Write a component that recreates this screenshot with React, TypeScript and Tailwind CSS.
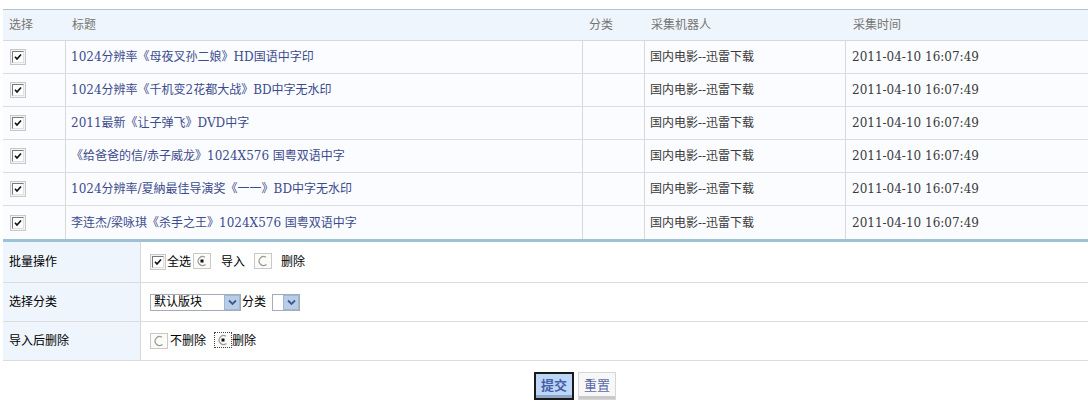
import React from "react";

const rows = [
  "1024分辨率《母夜叉孙二娘》HD国语中字印",
  "1024分辨率《千机变2花都大战》BD中字无水印",
  "2011最新《让子弹飞》DVD中字",
  "《给爸爸的信/赤子威龙》1024X576 国粤双语中字",
  "1024分辨率/夏納最佳导演奖《一一》BD中字无水印",
  "李连杰/梁咏琪《杀手之王》1024X576 国粤双语中字",
];

const font = { fontFamily: '"DejaVu Serif", "Noto Sans CJK SC", serif' };

function Check({ size = 16 }: { size?: number }) {
  return (
    <span
      className="inline-flex items-center justify-center border border-[#c8c8c8] bg-[#f4f4f4]"
      style={{ width: size, height: size }}
    >
      <span className="inline-flex items-center justify-center w-[12px] h-[12px] bg-white border border-t-[#7a7a7a] border-l-[#7a7a7a] border-r-[#e0e0e0] border-b-[#e0e0e0]">
        <svg width="8" height="8" viewBox="0 0 8 8">
          <path d="M1 3.8 L3 6 L7 1.5" stroke="#111" strokeWidth="1.7" fill="none" />
        </svg>
      </span>
    </span>
  );
}

function Radio({ checked, dotted }: { checked?: boolean; dotted?: boolean }) {
  return (
    <span
      className={
        "inline-flex items-center justify-center w-[18px] h-[16px] bg-[#fbfbf8] " +
        (dotted ? "border border-dotted border-[#444]" : "border border-[#c9c9c9]")
      }
    >
      <svg width="12" height="12" viewBox="0 0 12 12">
        <path d="M9 2.2 A4.5 4.5 0 1 0 9.5 9.5" stroke="#9a9a9a" strokeWidth="1.2" fill="none" />
        {checked && <rect x="4.5" y="4.5" width="3" height="3" fill="#111" />}
      </svg>
    </span>
  );
}

function Arrow() {
  return (
    <span className="inline-flex items-center justify-center w-[16px] h-[15px] bg-[#b9cde6] border border-[#9fb6d4]">
      <svg width="9" height="7" viewBox="0 0 9 7">
        <path d="M1 1.5 L4.5 5 L8 1.5" stroke="#3c5a8c" strokeWidth="1.8" fill="none" />
      </svg>
    </span>
  );
}

export default function App() {
  return (
    <div className="w-[1088px] h-[418px] bg-white text-[12px] pt-[9px] pl-[3px]" style={font}>
      <div className="border-t border-[#a9c6d6]">
        <div className="flex h-[31px] items-center bg-[#eff5fc] text-[#757575] border-b border-[#d9d9d9]">
          <div className="w-[63px] pl-[6px]">选择</div>
          <div className="w-[517px] pl-[6px]">标题</div>
          <div className="w-[62px] pl-[6px]">分类</div>
          <div className="w-[201px] pl-[6px]">采集机器人</div>
          <div className="flex-1 pl-[7px]">采集时间</div>
        </div>
        {rows.map((t, i) => (
          <div
            key={i}
            className={
              "flex h-[33px] bg-[#fafcff] " + (i < rows.length - 1 ? "border-b border-[#dcdcdc]" : "")
            }
          >
            <div className="w-[63px] flex items-center pl-[7px] border-r border-[#d8d8d8]">
              <Check />
            </div>
            <div className="w-[517px] flex items-center pl-[5px] text-[#3d4b8c] border-r border-[#d8d8d8]">
              {t}
            </div>
            <div className="w-[62px] border-r border-[#d8d8d8]" />
            <div className="w-[201px] flex items-center pl-[5px] text-[#3a3a3a] border-r border-[#d8d8d8]">
              国内电影--迅雷下载
            </div>
            <div className="flex-1 flex items-center pl-[6px] text-[#3a3a3a]">2011-04-10 16:07:49</div>
          </div>
        ))}
        <div className="h-[3px] bg-[#9dc2d6]" />
        <div className="flex h-[41px] border-b border-[#dcdcdc] text-black">
          <div className="w-[138px] flex items-center pl-[6px] bg-[#eff5fc] border-r border-[#d8d8d8]">批量操作</div>
          <div className="flex-1 flex items-center pl-[9px]">
            <Check />
            <span className="ml-[1px]">全选</span>
            <span className="ml-[2px]"><Radio checked /></span>
            <span className="ml-[10px]">导入</span>
            <span className="ml-[9px]"><Radio /></span>
            <span className="ml-[9px]">删除</span>
          </div>
        </div>
        <div className="flex h-[39px] border-b border-[#dcdcdc] text-black">
          <div className="w-[138px] flex items-center pl-[6px] bg-[#eff5fc] border-r border-[#d8d8d8]">选择分类</div>
          <div className="flex-1 flex items-center pl-[9px]">
            <span className="flex items-center h-[17px] w-[91px] border border-[#a5acb5] bg-white">
              <span className="flex-1 pl-[3px] leading-none">默认版块</span>
              <Arrow />
            </span>
            <span className="ml-[1px]">分类</span>
            <span className="ml-[6px] flex items-center justify-end h-[17px] w-[28px] border border-[#a5acb5] bg-white">
              <Arrow />
            </span>
          </div>
        </div>
        <div className="flex h-[39px] border-b border-[#dcdcdc] text-black">
          <div className="w-[138px] flex items-center pl-[6px] bg-[#eff5fc] border-r border-[#d8d8d8]">导入后删除</div>
          <div className="flex-1 flex items-center pl-[9px]">
            <Radio />
            <span className="ml-[2px]">不删除</span>
            <span className="ml-[8px]"><Radio checked dotted /></span>
            <span>删除</span>
          </div>
        </div>
        <div className="flex gap-[4px] pt-[11px] pl-[531px]">
          <button className="w-[40px] h-[28px] bg-[#bcd6f7] border-2 border-[#1a1a1a] shadow-[inset_0_-3px_0_#8fa6c8] text-[#4a5ea8] font-bold text-[13px]">
            提交
          </button>
          <button className="w-[38px] h-[28px] bg-[#f7f7f7] border border-[#d6d6d6] shadow-[inset_0_-3px_0_#c9c9c9] text-[#5a6aa8] text-[13px]">
            重置
          </button>
        </div>
      </div>
    </div>
  );
}
